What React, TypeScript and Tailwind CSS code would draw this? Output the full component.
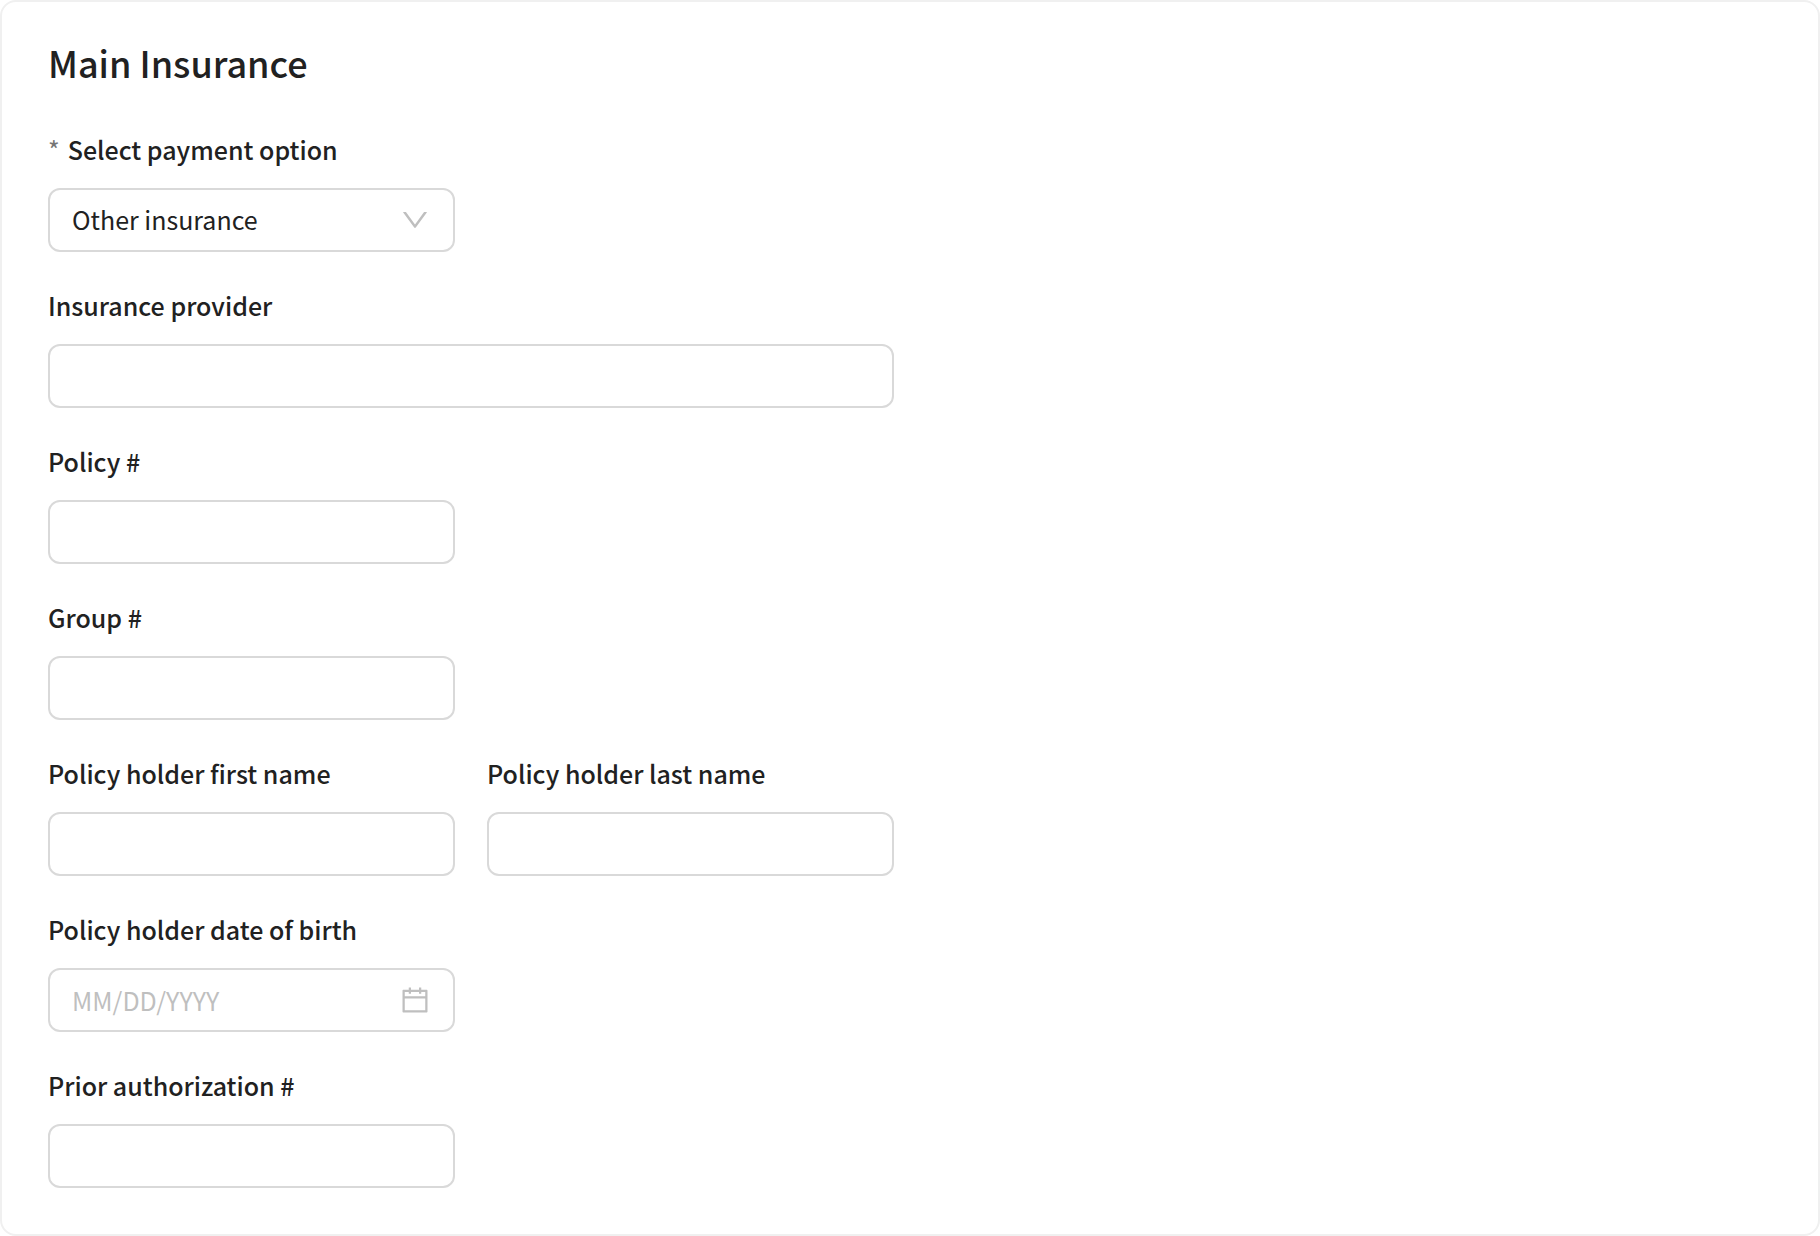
import { useState } from "react";
import type { ReactNode } from "react";
import { AiOutlineCalendar, AiOutlineDown } from "react-icons/ai";

interface FieldProps {
  id: string;
  label: string;
  required?: boolean;
  className?: string;
  children?: ReactNode;
}

const controlStyles =
  "block h-16 w-full appearance-none rounded-xl border-2 border-[#d9d9d9] bg-white px-[22px] text-[25px] text-[#212121] outline-none placeholder:text-[#bfbfbf] focus:border-blue-400";

const MainInsuranceForm = () => {
  const [option, setOption] = useState("other");

  return (
    <form className="rounded-2xl border-2 border-[#f0f0f0] bg-white p-[46px] pt-8">
      <h2 className="text-[36px] leading-[56px] font-medium">Main Insurance</h2>

      {/* Four column grid, fields only use the left half */}
      <div className="mt-10 grid grid-cols-4 gap-x-8 gap-y-[34px]">
        <Field id="payment-option" label="Select payment option" required>
          <div className="relative">
            <select
              id="payment-option"
              required
              value={option}
              onChange={(e) => setOption(e.target.value)}
              className={controlStyles}
            >
              <option value="other">Other insurance</option>
            </select>
            <AiOutlineDown
              size={32}
              className="pointer-events-none absolute inset-y-0 right-6 my-auto text-[#bfbfbf]"
            />
          </div>
        </Field>

        <Field id="provider" label="Insurance provider" className="col-start-1 col-span-2" />
        <Field id="policy" label="Policy #" />
        <Field id="group" label="Group #" />
        <Field id="first-name" label="Policy holder first name" />
        <Field id="last-name" label="Policy holder last name" className="col-start-2" />

        <Field id="dob" label="Policy holder date of birth">
          <div className="relative">
            <input id="dob" type="text" placeholder="MM/DD/YYYY" className={controlStyles} />
            <AiOutlineCalendar
              size={32}
              className="pointer-events-none absolute inset-y-0 right-6 my-auto text-[#bfbfbf]"
            />
          </div>
        </Field>

        <Field id="prior-auth" label="Prior authorization #" />
      </div>
    </form>
  );
};

// Label on top, plain text input unless children are given
const Field = ({ id, label, required, className = "col-start-1", children }: FieldProps) => (
  <div className={className}>
    <label htmlFor={id} className="mb-5 flex gap-2 text-[25px] leading-[38px] font-medium whitespace-nowrap">
      {required && <span className="font-normal text-[#757575]">*</span>}
      {label}
    </label>
    {children ?? <input id={id} type="text" className={controlStyles} />}
  </div>
);

export default function App() {
  return (
    <main className="min-h-screen bg-white font-['Noto_Sans_CJK_SC',sans-serif] text-[#212121]">
      <MainInsuranceForm />
    </main>
  );
}
